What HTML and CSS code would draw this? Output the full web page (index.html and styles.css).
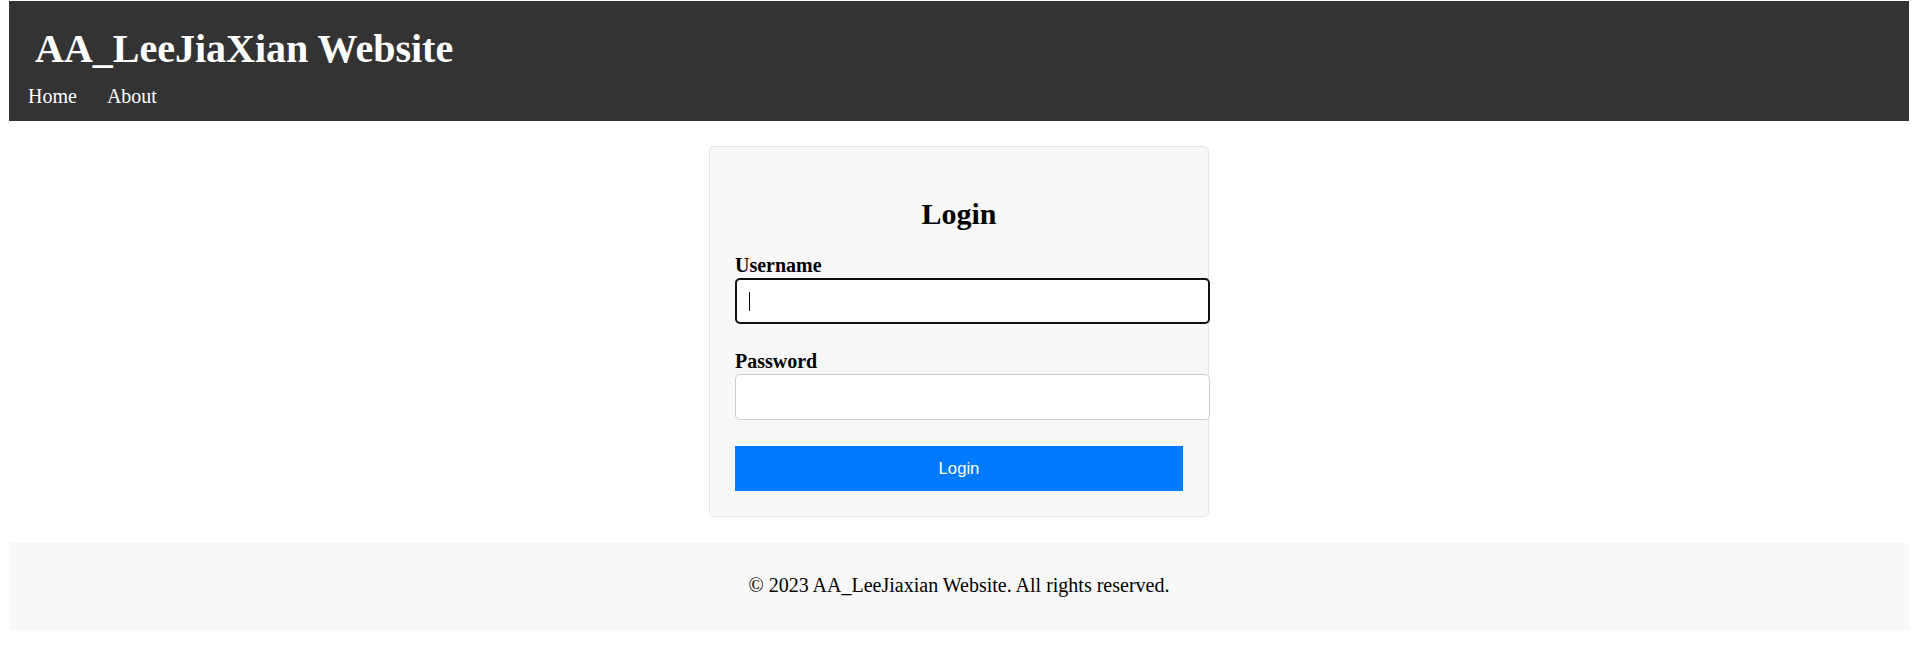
FILE: index.html
```html
<!DOCTYPE html>
<html lang="en">
<head>
<meta charset="utf-8">
<title>Login - AA_LeeJiaXian Website</title>
<link rel="stylesheet" href="styles.css">
</head>
<body>
<div class="page">
  <header class="site-header">
    <h1 class="site-title">AA_LeeJiaXian Website</h1>
    <nav class="site-nav">
      <a href="#" class="nav-link">Home</a>
      <a href="#" class="nav-link">About</a>
    </nav>
  </header>

  <main class="main">
    <section class="login-card">
      <h2 class="login-title">Login</h2>
      <form class="login-form">
        <div class="field">
          <label class="field-label" for="username">Username</label>
          <div class="input-wrap">
            <input class="field-input is-focused" type="text" id="username" name="username">
            <span class="fake-caret"></span>
          </div>
        </div>
        <div class="field">
          <label class="field-label" for="password">Password</label>
          <div class="input-wrap">
            <input class="field-input" type="password" id="password" name="password">
          </div>
        </div>
        <button class="login-button" type="button">Login</button>
      </form>
    </section>
  </main>

  <footer class="site-footer">
    <p class="footer-text">&copy; 2023 AA_LeeJiaxian Website. All rights reserved.</p>
  </footer>
</div>
</body>
</html>
```

FILE: styles.css
```css
html, body {
  margin: 0;
  padding: 0;
  background: #ffffff;
}

body {
  font-family: "Liberation Serif", "Times New Roman", serif;
  color: #000;
}

.page {
  padding: 1px 10px 16px 9px;
}

.site-header {
  background: #333333;
  color: #ffffff;
  padding: 25px 0 13px 0;
  height: 120px;
  box-sizing: border-box;
}

.site-title {
  margin: 0;
  padding-left: 26px;
  font-size: 40px;
  line-height: 46px;
  font-weight: bold;
}

.site-nav {
  display: flex;
  gap: 30px;
  margin-top: 12px;
  padding-left: 19px;
}

.nav-link {
  color: #ffffff;
  text-decoration: none;
  font-size: 20px;
  line-height: 24px;
}

.main {
  display: flex;
  justify-content: center;
  padding: 25px 0 26px 0;
}

.login-card {
  width: 500px;
  box-sizing: border-box;
  background: #f8f8f8;
  border: 1px solid #e4e4e4;
  border-radius: 5px;
  padding: 25px;
}

.login-title {
  margin: 25px 0 23px 0;
  text-align: center;
  font-size: 30px;
  line-height: 34px;
  font-weight: bold;
}

.login-form {
  display: flex;
  flex-direction: column;
}

.field {
  display: flex;
  flex-direction: column;
  margin-bottom: 26px;
}

.field-label {
  font-size: 20px;
  line-height: 23px;
  font-weight: bold;
  margin-bottom: 1px;
}

.input-wrap {
  position: relative;
  width: 448px;
}

.field-input {
  display: block;
  width: 475px;
  height: 46px;
  box-sizing: border-box;
  padding: 0 12px;
  border: 1px solid #cccccc;
  border-radius: 5px;
  background: #ffffff;
  font-family: "Liberation Sans", Arial, sans-serif;
  font-size: 16.67px;
  outline: none;
}

.field-input.is-focused {
  border: 2px solid #101010;
}

.fake-caret {
  position: absolute;
  left: 14px;
  top: 14px;
  width: 1px;
  height: 19px;
  background: #000;
}

.login-button {
  width: 448px;
  height: 45px;
  border: none;
  border-radius: 0;
  background: #007bff;
  color: #ffffff;
  font-family: "Liberation Sans", Arial, sans-serif;
  font-size: 16.67px;
  cursor: pointer;
}

.site-footer {
  background: #f8f8f8;
  padding: 31px 0 33px 0;
  text-align: center;
}

.footer-text {
  margin: 0;
  font-size: 20px;
  line-height: 23px;
}
```
